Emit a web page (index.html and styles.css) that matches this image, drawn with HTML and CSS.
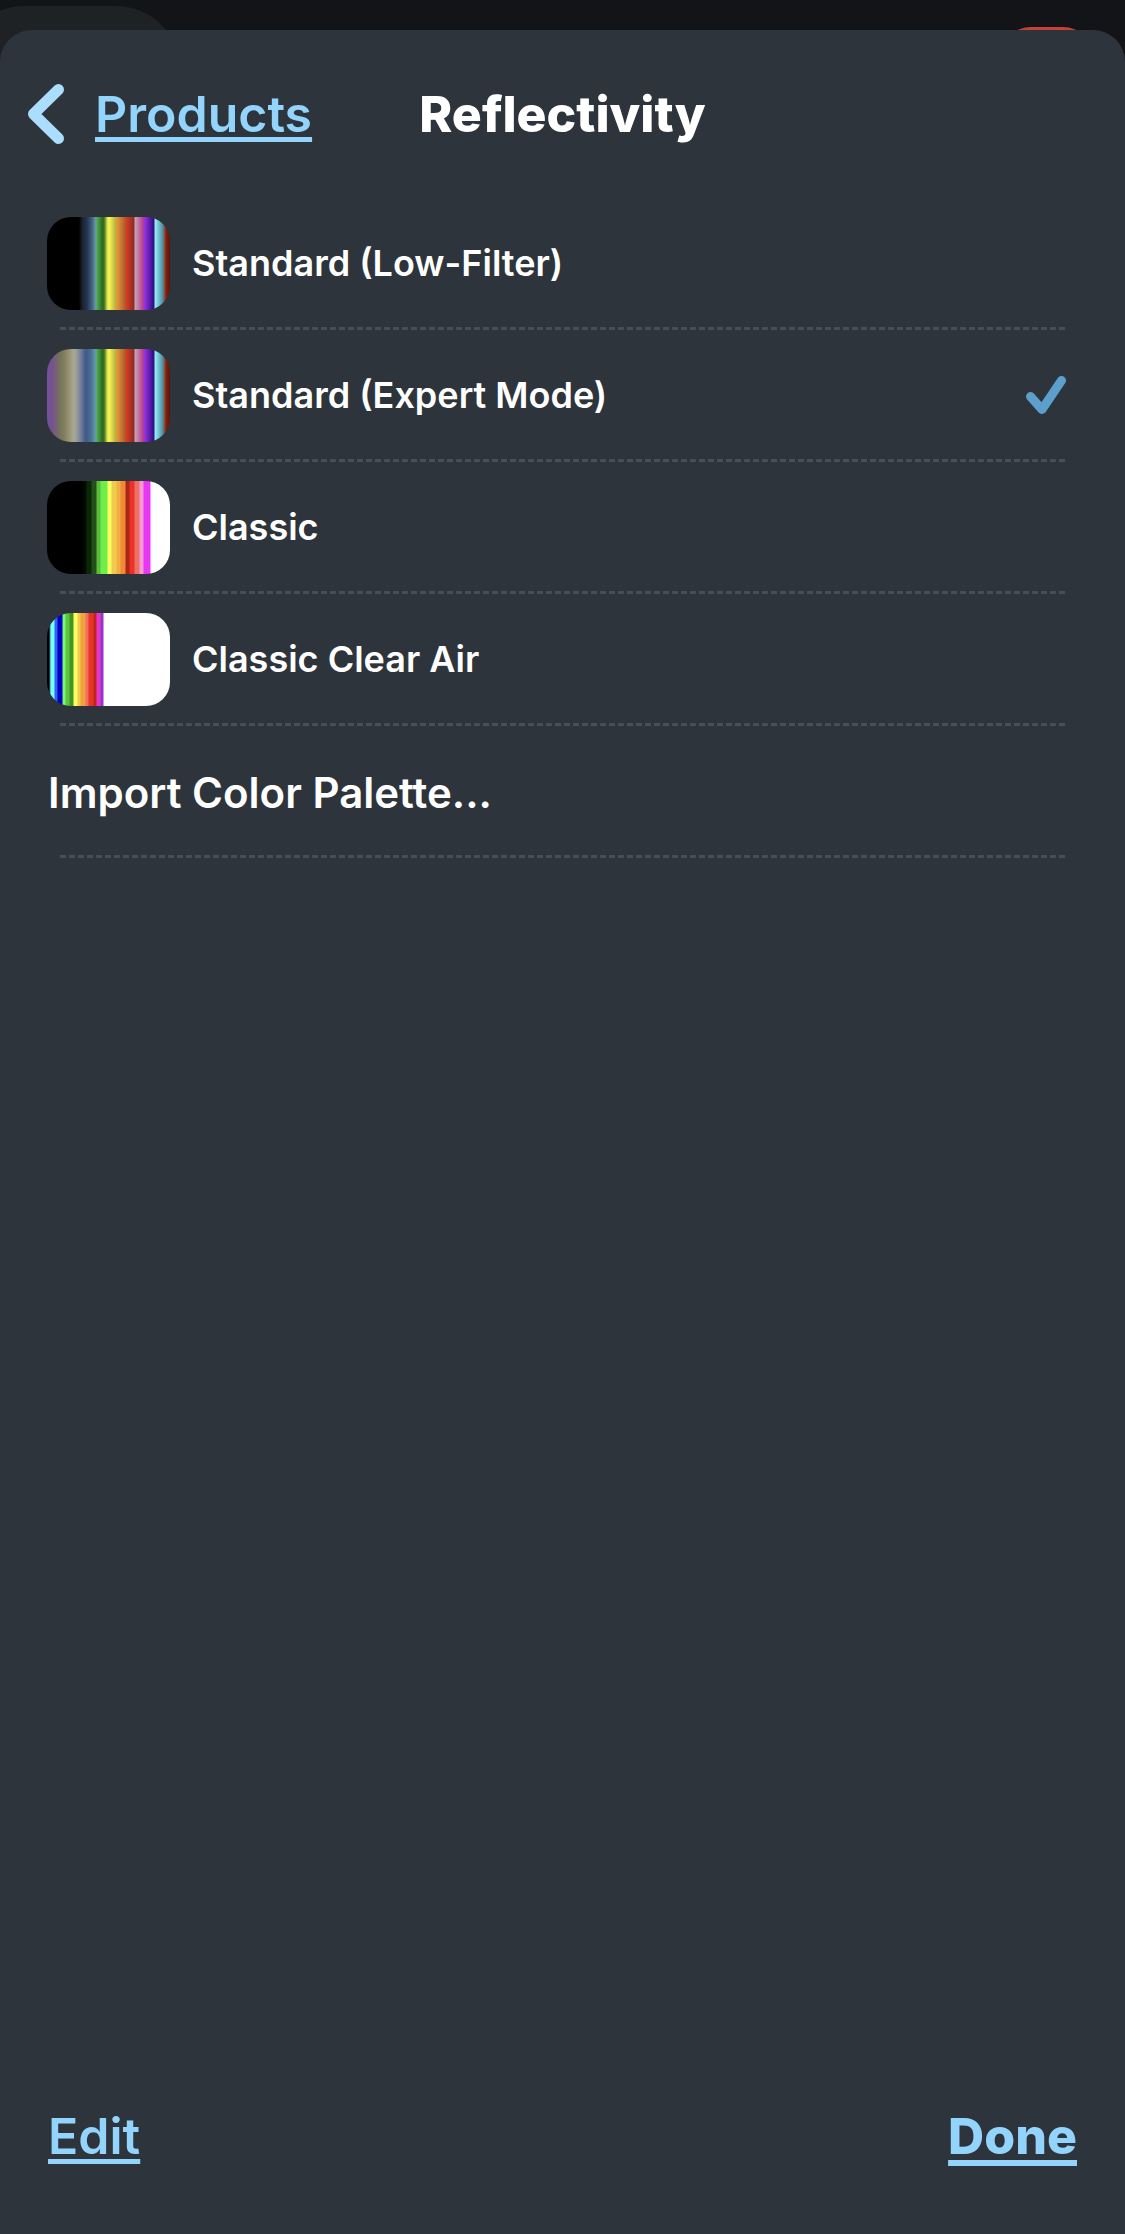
FILE: index.html
```html
<!DOCTYPE html>
<html lang="en">
<head>
  <meta charset="utf-8">
  <meta name="viewport" content="width=device-width, initial-scale=1">
  <title>Reflectivity</title>
  <link rel="stylesheet" href="styles.css">
</head>
<body>
  <div class="backdrop" aria-hidden="true">
    <div class="backdrop-card"></div>
    <div class="backdrop-badge"></div>
  </div>
  <main class="sheet">
    <header class="header">
      <a class="back" href="#products">
        <svg class="back-icon" viewBox="0 0 36 60" aria-hidden="true"><path d="M30.500 5.500 5.500 30l25 24.500"/></svg>
        <span class="back-label">Products</span>
      </a>
      <h1 class="title">Reflectivity</h1>
    </header>
    <form class="palettes">
      <label class="row">
        <input class="row-input" type="radio" name="palette">
        <span class="swatch swatch-low"></span>
        <span class="row-name">Standard (Low-Filter)</span>
        <svg class="check" viewBox="0 0 40 38" aria-hidden="true"><path d="m4.500 20.500 11.500 13L35.500 4.500"/></svg>
      </label>
      <label class="row">
        <input class="row-input" type="radio" name="palette" checked>
        <span class="swatch swatch-expert"></span>
        <span class="row-name">Standard (Expert Mode)</span>
        <svg class="check" viewBox="0 0 40 38" aria-hidden="true"><path d="m4.500 20.500 11.500 13L35.500 4.500"/></svg>
      </label>
      <label class="row">
        <input class="row-input" type="radio" name="palette">
        <span class="swatch swatch-classic"></span>
        <span class="row-name">Classic</span>
        <svg class="check" viewBox="0 0 40 38" aria-hidden="true"><path d="m4.500 20.500 11.500 13L35.500 4.500"/></svg>
      </label>
      <label class="row">
        <input class="row-input" type="radio" name="palette">
        <span class="swatch swatch-clear"></span>
        <span class="row-name">Classic Clear Air</span>
        <svg class="check" viewBox="0 0 40 38" aria-hidden="true"><path d="m4.500 20.500 11.500 13L35.500 4.500"/></svg>
      </label>
      <button class="row import" type="button">Import Color Palette...</button>
    </form>
    <footer class="footer">
      <button class="action" type="button">Edit</button>
      <button class="action action-done" type="button">Done</button>
    </footer>
  </main>
</body>
</html>
```

FILE: styles.css
```css
* {
  box-sizing: border-box;
}

body {
  margin: 0;
  padding-top: 30px;
  background: #131418;
  color: #fff;
  font-family: Inter, "Liberation Sans", sans-serif;
  font-weight: 600;
}

button {
  margin: 0;
  padding: 0;
  border: 0;
  background: none;
  color: inherit;
  font: inherit;
  cursor: pointer;
}

/* Dimmed screen that shows behind the sheet */
.backdrop {
  position: absolute;
  inset: 0 0 auto;
  height: 90px;
  overflow: hidden;
}

.backdrop-card {
  position: absolute;
  top: 6px;
  left: -40px;
  width: 220px;
  height: 160px;
  border-radius: 64px;
  background: #1f2225;
}

.backdrop-badge {
  position: absolute;
  top: 27px;
  right: 32px;
  width: 92px;
  height: 60px;
  border-radius: 30px;
  background: #c6413a;
}

.sheet {
  position: relative;
  display: flex;
  flex-direction: column;
  min-height: calc(100vh - 30px);
  border-radius: 32px 32px 0 0;
  background: #2e343b;
}

.header {
  display: grid;
  grid-template-columns: 1fr auto 1fr;
  align-items: center;
  height: 168px;
  padding: 0 28px;
}

.back {
  display: flex;
  align-items: center;
  gap: 31px;
  color: #92d4fb;
  text-decoration: none;
}

.back-icon {
  width: 36px;
  height: 60px;
  fill: none;
  stroke: #abdefc;
  stroke-width: 11;
  stroke-linecap: round;
  stroke-linejoin: round;
}

.back-label,
.action {
  font-size: 50px;
  line-height: 60px;
  text-decoration: underline;
  text-decoration-thickness: 5px;
  text-decoration-skip-ink: none;
  text-underline-offset: 5px;
}

.title {
  margin: 0;
  font-size: 50px;
  line-height: 60px;
  font-weight: 800;
}

.row {
  display: flex;
  align-items: center;
  gap: 22px;
  width: 100%;
  height: 132px;
  padding: 0 59px 2px 47px;
  background: repeating-linear-gradient(90deg, #484e56 0 6px, transparent 6px 9px) 60px 100% / calc(100% - 120px) 3px no-repeat;
  font-size: 36px;
  cursor: pointer;
}

.row-input {
  position: absolute;
  opacity: 0;
}

.row-name {
  flex: 1;
}

.import {
  padding: 0 48px;
  font-size: 42px;
  text-align: left;
}

.check {
  width: 40px;
  height: 38px;
  visibility: hidden;
  fill: none;
  stroke: #5b9fca;
  stroke-width: 9;
  stroke-linecap: round;
  stroke-linejoin: round;
}

.row-input:checked ~ .check {
  visibility: visible;
}

.swatch {
  width: 123px;
  height: 93px;
  border-radius: 24px;
}

.swatch-low {
  background: linear-gradient(90deg,
    #000 32px, #1a1f2b 35px, #25344f 40px, #45607f 45px, #64a0ac 49px,
    #52a84a 50px, #296421 56px, #5c8a2b 58px,
    #d8dc48 60px, #f8f755 62px, #b5ad40 69px,
    #ea943a 70px, #a76128 78px,
    #dd3b26 79px, #8a2c22 87px,
    #c9a4b8 88px, #b83d8b 96px,
    #9c35de 97px, #2f0b85 107px,
    #96f0f7 108px, #4b8ba4 116px,
    #8c5b49 117px, #85200f 119px, #5c1408 123px);
}

.swatch-expert {
  background: linear-gradient(90deg,
    #7450a0 0, #74518f 5px, #75745a 13px, #827e5c 17px, #aaa98f 27px,
    #8b93a0 31px, #3f5888 39px, #4d6f96 44px, #64a0ac 49px,
    #52a84a 50px, #296421 56px, #5c8a2b 58px,
    #d8dc48 60px, #f8f755 62px, #b5ad40 69px,
    #ea943a 70px, #a76128 78px,
    #dd3b26 79px, #8a2c22 87px,
    #c9a4b8 88px, #b83d8b 96px,
    #9c35de 97px, #2f0b85 107px,
    #96f0f7 108px, #4b8ba4 116px,
    #8c5b49 117px, #85200f 119px, #5c1408 123px);
}

.swatch-classic {
  background: linear-gradient(90deg,
    #000 34px, #021003 39px, #0b2708 40px 44px, #225018 45px 49px,
    #5bbd3b 50px 53px, #6eee4b 54px 60px, #fdfc5d 61px 64px,
    #eecb4c 65px 69px, #f4ad43 70px 73px, #ef8b36 74px 78px,
    #a9251a 79px 82px, #e93425 83px 87px, #ed6f66 88px 92px,
    #f19bd0 93px 96px, #e935f6 97px 103px, #fff 104px);
}

.swatch-clear {
  background: linear-gradient(90deg,
    #000 2px, #7afbfd 4px 7px, #2b65f0 8px 10px, #0000c4 11px 15px,
    #78f877 16px 18px, #5cc538 19px 22px, #3f9627 23px 26px,
    #fffd60 27px 30px, #f0cb54 31px 33px, #f3a13c 34px 38px,
    #ed6f66 39px 41px, #e93425 42px 46px, #b9281c 47px 49px,
    #e935cc 50px 53px, #9437cb 54px 56px, #fff 57px);
}

.footer {
  display: flex;
  justify-content: space-between;
  margin-top: auto;
  padding: 40px 48px 68px;
  color: #92d4fb;
}

.action-done {
  font-weight: 800;
  text-decoration-thickness: 6px;
  text-underline-offset: 6px;
}
```
